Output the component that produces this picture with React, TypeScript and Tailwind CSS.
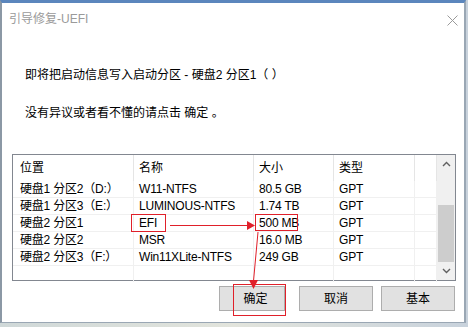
import React from "react";

const font = { fontFamily: '"Liberation Sans", "Noto Sans CJK SC", sans-serif' };

const rows = [
  { loc: "硬盘1 分区2（D:）", name: "W11-NTFS", size: "80.5 GB", type: "GPT" },
  { loc: "硬盘1 分区3（E:）", name: "LUMINOUS-NTFS", size: "1.74 TB", type: "GPT" },
  { loc: "硬盘2 分区1", name: "EFI", size: "500 MB", type: "GPT" },
  { loc: "硬盘2 分区2", name: "MSR", size: "16.0 MB", type: "GPT" },
  { loc: "硬盘2 分区3（F:）", name: "Win11XLite-NTFS", size: "249 GB", type: "GPT" },
];

function Cell({ children, first }: { children?: React.ReactNode; first?: boolean }) {
  return (
    <div
      className={`h-[17px] border-r border-b border-[#f0f0f0] flex items-center whitespace-nowrap overflow-hidden tracking-[-0.2px] ${
        first ? "pl-[7px]" : "pl-[5px]"
      }`}
    >
      {children}
    </div>
  );
}

function HeadCell({ children, first }: { children?: React.ReactNode; first?: boolean }) {
  return (
    <div
      className={`h-[26px] border-r border-[#e5e5e5] flex items-center ${first ? "pl-[7px]" : "pl-[5px]"}`}
    >
      {children}
    </div>
  );
}

export default function App() {
  return (
    <div
      className="w-[468px] h-[327px] overflow-hidden bg-gradient-to-r from-[#cfd8d8] via-[#e2e4dc] to-[#c8d2dc] text-[12px] text-black"
      style={font}
    >
      <div className="relative w-[466px] h-[323px] bg-white border-l-2 border-r-2 border-b border-t-[3px] border-l-[#8b98a5] border-r-[#9aa7b4] border-b-[#9aa7b4] border-t-[#5b86bd] flex flex-col">
        {/* title bar */}
        <div className="h-[32px] flex items-center justify-between pl-[7px] pr-[6px]">
          <span className="text-[12px] text-[#9a9a9a]">引导修复-UEFI</span>
          <svg width="11" height="11" viewBox="0 0 11 11" className="mt-[2px]">
            <path d="M0.5 0.5 L10.5 10.5 M10.5 0.5 L0.5 10.5" stroke="#9a9a9a" strokeWidth="1" />
          </svg>
        </div>

        {/* message */}
        <div className="pl-[23px] pt-[32px] leading-[16px]">即将把启动信息写入启动分区 - 硬盘2 分区1（ ）</div>
        <div className="pl-[23px] pt-[22px] leading-[16px]">没有异议或者看不懂的请点击 确定 。</div>

        {/* table */}
        <div className="ml-[10px] mt-[33px] w-[444px] h-[127px] border border-[#828790] flex">
          <div className="grid grid-cols-[121px_120px_80px_81px_22px] content-start">
            <HeadCell first>位置</HeadCell>
            <HeadCell>名称</HeadCell>
            <HeadCell>大小</HeadCell>
            <HeadCell>类型</HeadCell>
            <HeadCell />
            {rows.map((r) => (
              <React.Fragment key={r.loc}>
                <Cell first>{r.loc}</Cell>
                <Cell>{r.name}</Cell>
                <Cell>{r.size}</Cell>
                <Cell>{r.type}</Cell>
                <Cell />
              </React.Fragment>
            ))}
            <div className="h-[16px] border-r border-[#f0f0f0]" />
            <div className="h-[16px] border-r border-[#f0f0f0]" />
            <div className="h-[16px] border-r border-[#f0f0f0]" />
            <div className="h-[16px] border-r border-[#f0f0f0]" />
            <div className="h-[16px] border-r border-[#f0f0f0]" />
          </div>
          <div className="w-[18px] bg-[#f0f0f0] flex flex-col">
            <div className="h-[17px] flex items-center justify-center">
              <svg width="9" height="6" viewBox="0 0 9 6">
                <path d="M1 5 L4.5 1.5 L8 5" fill="none" stroke="#606060" strokeWidth="1.4" />
              </svg>
            </div>
            <div className="mt-[33px] mx-[1px] h-[57px] bg-[#cdcdcd]" />
            <div className="flex-1 flex items-center justify-center">
              <svg width="9" height="6" viewBox="0 0 9 6">
                <path d="M1 1 L4.5 4.5 L8 1" fill="none" stroke="#606060" strokeWidth="1.4" />
              </svg>
            </div>
          </div>
        </div>

        {/* buttons */}
        <div className="mt-[5px] pr-[9px] flex justify-end gap-[8px]">
          <button className="w-[66px] h-[25px] bg-[#e1e1e1] border border-[#adadad] pl-[7px]">确定</button>
          <button className="ml-[6px] w-[74px] h-[25px] bg-[#e1e1e1] border border-[#adadad]">取消</button>
          <button className="w-[74px] h-[25px] bg-[#e1e1e1] border border-[#adadad]">基本</button>
        </div>

        {/* red annotations */}
        <svg className="absolute left-[-2px] top-[-3px] pointer-events-none" width="468" height="327" viewBox="0 0 468 327">
          <rect x="131.5" y="214.5" width="34" height="17" fill="none" stroke="#e0202a" strokeWidth="1" />
          <rect x="255.5" y="214.5" width="42" height="16" fill="none" stroke="#e0202a" strokeWidth="1" />
          <rect x="233.5" y="284.5" width="52" height="31" fill="none" stroke="#e0202a" strokeWidth="1" />
          <path d="M170 225.5 L248 225.5" stroke="#e0202a" strokeWidth="1" />
          <path d="M247 221 L255 225.5 L247 230 Z" fill="#e0202a" />
          <path d="M258 232 L253.5 281" stroke="#e0202a" strokeWidth="1" />
          <path d="M249 280 L258 280 L253.5 289 Z" fill="#e0202a" />
        </svg>
      </div>
    </div>
  );
}
